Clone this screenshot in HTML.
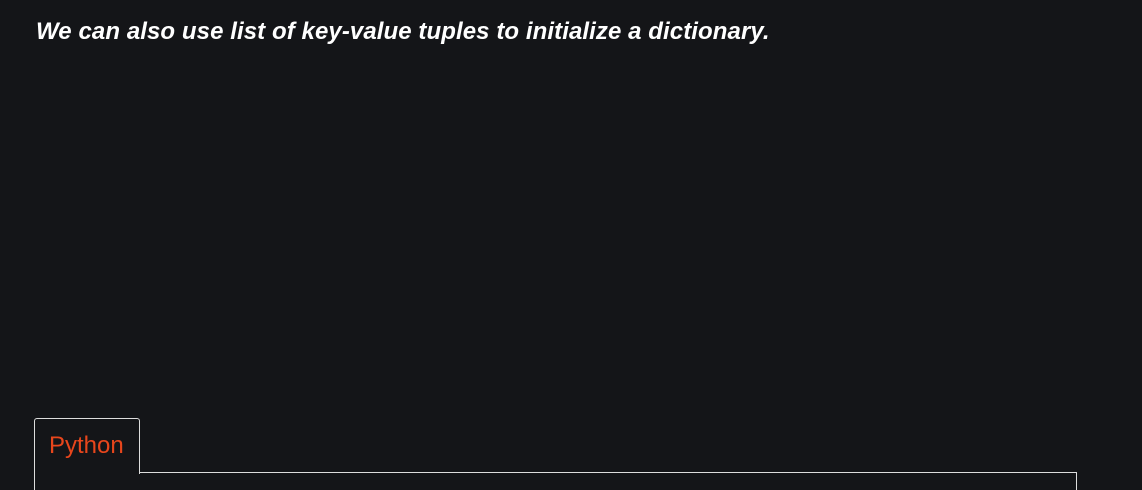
<!DOCTYPE html>
<html style="overflow:hidden;height:490px"><head><style>
body{margin:0;width:1142px;height:490px;background:#141518;overflow:hidden;position:relative;font-family:"Liberation Sans",sans-serif}
h2{position:absolute;left:36px;top:18px;margin:0;font-size:24px;font-style:italic;font-weight:bold;color:#fff;letter-spacing:0.08px;white-space:nowrap}
.tab{position:absolute;left:34px;top:418px;width:104px;height:55px;border:1px solid #ddd;border-bottom:none;border-radius:3px 3px 0 0;background:#141518;z-index:2}
.tab span{position:absolute;left:14px;top:13px;font-size:24px;color:#e8461c}
.box{position:absolute;left:34px;top:472px;width:1041px;height:30px;border:1px solid #ddd}
</style></head><body>
<h2>We can also use list of key-value tuples to initialize a dictionary.</h2>
<div class="box"></div>
<div class="tab"><span>Python</span></div>
</body></html>
